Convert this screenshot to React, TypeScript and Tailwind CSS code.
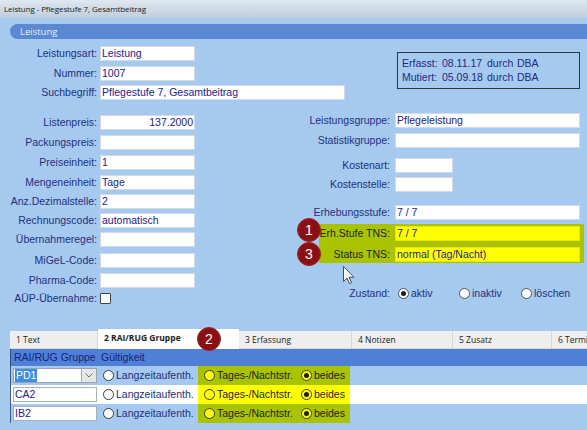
import React from "react";

const ARIAL = "font-['Liberation_Sans',Arial,sans-serif]";
const SEGOE = "font-['Open_Sans',sans-serif]";

type RowProps = {
  label: string;
  value?: string;
  cls?: string;
  labelCls?: string;
  inputCls?: string;
  right?: boolean;
  gap?: string;
  bg?: string;
  labelColor?: string;
};

const Row = ({
  label,
  value = "",
  cls = "",
  labelCls = "w-[97px]",
  inputCls = "w-[95px]",
  right = false,
  gap = "gap-[3px]",
  bg = "bg-white border-[#d3dae3]",
  labelColor = "text-[#233080]",
}: RowProps) => (
  <div className={`flex items-center h-[15px] ${gap} ${cls}`}>
    <span className={`${labelCls} text-right text-[10.5px] ${labelColor} leading-[15px] whitespace-nowrap`}>{label}</span>
    <div
      className={`${inputCls} ${bg} h-[15px] border text-[10.5px] leading-[13px] text-[#221a8e] px-[1px] whitespace-nowrap overflow-hidden ${right ? "text-right" : ""}`}
    >
      {value}
    </div>
  </div>
);

const Radio = ({ checked = false, fill = "bg-white", border = "border-[#3a3a3a]" }: { checked?: boolean; fill?: string; border?: string }) => (
  <span className={`w-[11px] h-[11px] rounded-full border ${border} ${fill} flex items-center justify-center shrink-0`}>
    {checked && <span className="w-[5px] h-[5px] rounded-full bg-[#1e1e1e]" />}
  </span>
);

const Badge = ({ n, cls }: { n: string; cls: string }) => (
  <div
    className={`absolute ${cls} w-[24px] h-[24px] rounded-full bg-[#8a1014] border border-[#9c2a2a] flex items-center justify-center text-white text-[14px] leading-none ${ARIAL}`}
  >
    {n}
  </div>
);

const Tab = ({ text, w, active = false }: { text: string; w: string; active?: boolean }) => (
  <div
    className={`${w} ${active ? "h-[20px] bg-white font-bold" : "h-[18px] bg-[#eeeeee] border-r border-b border-[#d6d6d6]"} shrink-0 pl-[6px] text-[8.5px] leading-[18px] text-[#222] whitespace-nowrap overflow-hidden ${SEGOE}`}
  >
    {text}
  </div>
);

const GridRow = ({ value, combo = false, hl, rowBg }: { value: string; combo?: boolean; hl: string; rowBg: string }) => (
  <div className={`ml-[10px] h-[19px] border-l border-[#3d5a8c] flex items-center ${rowBg}`}>
    <div className="w-[87px] pl-[2px] flex items-center">
      {combo ? (
        <div className="w-[84px] h-[15px] bg-white border border-[#9aa3ad] flex items-center">
          <span className="ml-[1px] bg-[#3a8ee6] text-white text-[10.5px] leading-[13px] px-[1px]">PD1</span>
          <span className="ml-auto w-[15px] h-[13px] bg-[#e6e6e6] border-l border-[#adadad] flex items-center justify-center">
            <svg width="8" height="5" viewBox="0 0 8 5">
              <path d="M0.5 0.5 L4 4 L7.5 0.5" fill="none" stroke="#707070" strokeWidth="1" />
            </svg>
          </span>
        </div>
      ) : (
        <div className="w-[84px] h-[15px] bg-white border border-[#a8b0ba] text-[10.5px] leading-[13px] text-[#221a8e] px-[1px]">
          {value}
        </div>
      )}
    </div>
    <div className="w-[100px] pl-[5px] flex items-center gap-[2px]">
      <Radio />
      <span className="text-[10.5px] text-[#233080] whitespace-nowrap">Langzeitaufenth.</span>
    </div>
    <div className={`w-[152px] h-full ${hl} flex items-center`}>
      <div className="w-[103px] pl-[6px] flex items-center gap-[2px]">
        <Radio fill="bg-[#ffff00]" />
        <span className="text-[10.5px] text-[#1e1e1e] whitespace-nowrap">Tages-/Nachtstr.</span>
      </div>
      <div className="flex items-center gap-[2px]">
        <Radio checked fill="bg-[#ffff00]" />
        <span className="text-[10.5px] text-[#1e1e1e] whitespace-nowrap">beides</span>
      </div>
    </div>
  </div>
);

export default function App() {
  return (
    <div className={`relative w-[587px] h-[430px] overflow-hidden bg-[#a6c9ef] ${ARIAL}`}>
      {/* Title bar */}
      <div className={`h-[18px] bg-gradient-to-b from-[#e0e7ef] to-[#bfcedd] pl-[4px] text-[8px] tracking-[-0.1px] leading-[18px] text-[#1b1b1b] ${SEGOE}`}>
        Leistung - Pflegestufe 7, Gesamtbeitrag
      </div>

      {/* Section header */}
      <div className={`mt-[6px] ml-[10px] h-[15px] rounded-l-[8px] bg-[#5a88d3] pl-[10px] text-[9.5px] leading-[15px] text-[#e6eef9] ${SEGOE}`}>
        Leistung
      </div>

      {/* Top block */}
      <div className="flex h-[61px]">
        <div className="w-[397px] flex flex-col">
          <Row cls="mt-[7px]" label="Leistungsart:" value="Leistung" />
          <Row cls="mt-[5px]" label="Nummer:" value="1007" />
          <Row cls="mt-[4px]" label="Suchbegriff:" value="Pflegestufe 7, Gesamtbeitrag" inputCls="w-[245px]" />
        </div>
        <div className="mt-[13px] w-[183px] h-[37px] border border-[#2f3540] pl-[4px] pt-[3px] text-[10.5px] leading-[14px] text-[#1f2a80]">
          <div className="flex">
            <span className="w-[40px]">Erfasst:</span>
            <span className="w-[45px]">08.11.17</span>
            <span className="w-[30px]">durch</span>
            <span>DBA</span>
          </div>
          <div className="flex">
            <span className="w-[40px]">Mutiert:</span>
            <span className="w-[45px]">05.09.18</span>
            <span className="w-[30px]">durch</span>
            <span>DBA</span>
          </div>
        </div>
      </div>

      {/* Lower block */}
      <div className="flex h-[228px]">
        <div className="w-[290px] flex flex-col">
          <Row cls="mt-[15px]" label="Listenpreis:" value="137.2000" right />
          <Row cls="mt-[5px]" label="Packungspreis:" />
          <Row cls="mt-[5px]" label="Preiseinheit:" value="1" />
          <Row cls="mt-[5px]" label="Mengeneinheit:" value="Tage" />
          <Row cls="mt-[4px]" label="Anz.Dezimalstelle:" value="2" />
          <Row cls="mt-[4px]" label="Rechnungscode:" value="automatisch" />
          <Row cls="mt-[4px]" label="Übernahmeregel:" />
          <Row cls="mt-[6px]" label="MiGeL-Code:" />
          <Row cls="mt-[5px]" label="Pharma-Code:" />
          <div className="mt-[5px] flex items-center h-[11px] gap-[3px]">
            <span className="w-[97px] text-right text-[10.5px] text-[#233080] leading-[11px] whitespace-nowrap">AÜP-Übernahme:</span>
            <span className="w-[11px] h-[11px] bg-white border border-[#444] rounded-[1px]" />
          </div>
        </div>

        <div className="flex-1 flex flex-col">
          <Row cls="mt-[13px]" label="Leistungsgruppe:" value="Pflegeleistung" labelCls="w-[100px]" gap="gap-[5px]" inputCls="w-[185px]" />
          <Row cls="mt-[5px]" label="Statistikgruppe:" labelCls="w-[100px]" gap="gap-[5px]" inputCls="w-[185px]" />
          <Row cls="mt-[10px]" label="Kostenart:" labelCls="w-[100px]" gap="gap-[5px]" inputCls="w-[58px]" />
          <Row cls="mt-[4px]" label="Kostenstelle:" labelCls="w-[100px]" gap="gap-[5px]" inputCls="w-[58px]" />
          <Row cls="mt-[13px]" label="Erhebungsstufe:" value="7 / 7" labelCls="w-[100px]" gap="gap-[5px]" inputCls="w-[185px]" />

          <div className="relative mt-[4px] ml-[29px] w-[265px] h-[39px] bg-[#a9c300] pt-[2px]">
            <Row
              label="Erh.Stufe TNS:"
              value="7 / 7"
              labelCls="w-[71px]"
              gap="gap-[5px]"
              inputCls="w-[185px]"
              bg="bg-[#ffff00] border-[#e6e600]"
              labelColor="text-[#1e1e1e]"
            />
            <Row
              cls="mt-[6px]"
              label="Status TNS:"
              value="normal (Tag/Nacht)"
              labelCls="w-[71px]"
              gap="gap-[5px]"
              inputCls="w-[185px]"
              bg="bg-[#ffff00] border-[#e6e600]"
              labelColor="text-[#1e1e1e]"
            />
            <Badge n="1" cls="left-[-22px] top-[-6px]" />
            <Badge n="3" cls="left-[-22px] top-[18px]" />
          </div>

          <div className="mt-[23px] flex items-center h-[15px] text-[10.5px] text-[#233080]">
            <span className="w-[100px] text-right">Zustand:</span>
            <div className="ml-[8px] w-[61px] flex items-center gap-[2px]">
              <Radio checked border="border-[#555]" />
              <span>aktiv</span>
            </div>
            <div className="w-[62px] flex items-center gap-[2px]">
              <Radio border="border-[#555]" />
              <span>inaktiv</span>
            </div>
            <div className="flex items-center gap-[2px]">
              <Radio border="border-[#555]" />
              <span>löschen</span>
            </div>
          </div>
        </div>
      </div>

      {/* Tabs */}
      <div className="ml-[10px] h-[21px] flex items-end">
        <Tab text="1 Text" w="w-[88px]" />
        <Tab text="2 RAI/RUG Gruppe" w="w-[141px]" active />
        <Tab text="3 Erfassung" w="w-[113px]" />
        <Tab text="4 Notizen" w="w-[101px]" />
        <Tab text="5 Zusatz" w="w-[99px]" />
        <Tab text="6 Termine" w="w-[40px]" />
      </div>

      {/* Grid header */}
      <div className="ml-[10px] h-[17px] bg-[#4f80d6] border-l border-[#2c4a80] flex items-center pl-[3px] text-[10.5px] text-[#16237a]">
        <span className="w-[87px]">RAI/RUG Gruppe</span>
        <span>Gültigkeit</span>
      </div>

      <GridRow value="PD1" combo hl="bg-[#a9c300]" rowBg="" />
      <GridRow value="CA2" hl="bg-[#ffff00]" rowBg="bg-white" />
      <GridRow value="IB2" hl="bg-[#a9c300]" rowBg="" />

      <Badge n="2" cls="left-[197px] top-[327px]" />

      {/* Mouse cursor */}
      <svg className="absolute left-[343px] top-[266px]" width="12" height="19" viewBox="0 0 12 19">
        <path d="M0.5 0.5 L0.5 15.5 L4 12 L6.5 17.5 L8.5 16.6 L6 11.2 L10.8 11.2 Z" fill="#ffffff" stroke="#4a4a4a" strokeWidth="1" strokeLinejoin="round" />
      </svg>
    </div>
  );
}
